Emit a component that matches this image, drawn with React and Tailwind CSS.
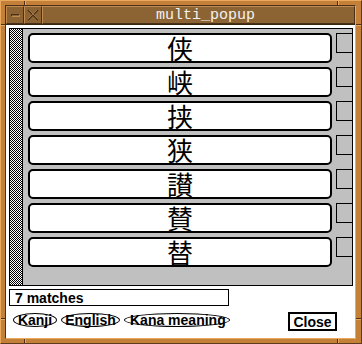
import React from "react";

const KANJI = ["侠", "峡", "挟", "狭", "讃", "賛", "替"];

function Notch({ className }) {
  return <div className={"absolute " + className} />;
}

export default function App() {
  return (
    <div
      className="relative w-[362px] h-[344px] overflow-hidden bg-[#c48038] border border-t-[#eaaa5e] border-l-[#eaaa5e] border-r-[#5c3c1c] border-b-[#5c3c1c]"
      style={{ fontFamily: '"Liberation Sans", Arial, sans-serif' }}
    >
      {/* frame notches */}
      <Notch className="left-[23px] top-0 w-[1px] h-[5px] bg-[#4a3018]" />
      <Notch className="left-[24px] top-0 w-[1px] h-[5px] bg-[#eaaa5e]" />
      <Notch className="left-[336px] top-0 w-[1px] h-[5px] bg-[#4a3018]" />
      <Notch className="left-[337px] top-0 w-[1px] h-[5px] bg-[#eaaa5e]" />
      <Notch className="left-0 top-[23px] w-[5px] h-[1px] bg-[#4a3018]" />
      <Notch className="left-0 top-[24px] w-[5px] h-[1px] bg-[#eaaa5e]" />
      <Notch className="right-0 top-[23px] w-[6px] h-[1px] bg-[#4a3018]" />
      <Notch className="right-0 top-[24px] w-[6px] h-[1px] bg-[#eaaa5e]" />
      <Notch className="left-0 top-[317px] w-[5px] h-[1px] bg-[#4a3018]" />
      <Notch className="left-0 top-[318px] w-[5px] h-[1px] bg-[#eaaa5e]" />
      <Notch className="right-0 top-[317px] w-[6px] h-[1px] bg-[#4a3018]" />
      <Notch className="right-0 top-[318px] w-[6px] h-[1px] bg-[#eaaa5e]" />
      <Notch className="left-[23px] bottom-0 w-[1px] h-[6px] bg-[#4a3018]" />
      <Notch className="left-[24px] bottom-0 w-[1px] h-[6px] bg-[#eaaa5e]" />
      <Notch className="left-[336px] bottom-0 w-[1px] h-[6px] bg-[#4a3018]" />
      <Notch className="left-[337px] bottom-0 w-[1px] h-[6px] bg-[#eaaa5e]" />

      <div className="absolute left-[4px] top-[4px] w-[351px] h-[334px] flex flex-col border border-t-[#4a3018] border-l-[#4a3018] border-r-[#eaaa5e] border-b-[#eaaa5e]">
        {/* title bar */}
        <div className="flex h-[19px] shrink-0 bg-[#8c6434] border-b border-[#3c2810]">
          <div className="w-[18px] h-full flex items-center justify-center bg-[#8c6434] border border-t-[#c08a50] border-l-[#c08a50] border-r-[#4a3018] border-b-[#4a3018]">
            <div className="w-[9px] h-[3px] border border-t-[#4a3018] border-l-[#4a3018] border-r-[#c08a50] border-b-[#c08a50]" />
          </div>
          <div className="w-[18px] h-full flex items-center justify-center bg-[#8c6434] border border-t-[#c08a50] border-l-[#c08a50] border-r-[#4a3018] border-b-[#4a3018]">
            <svg width="12" height="12" viewBox="0 0 12 12">
              <path d="M1 1 L11 11 M11 1 L1 11" stroke="#4a3018" strokeWidth="1.6" />
              <path d="M2 1 L11 10 M10 1 L1 10" stroke="#b08050" strokeWidth="0.8" />
            </svg>
          </div>
          <div className="flex-1 flex items-center justify-center border border-t-[#c08a50] border-l-[#c08a50] border-r-[#4a3018] border-b-[#4a3018]">
            <span
              className="text-[15px] leading-none text-[#f2f2f2] pl-[14px]"
              style={{ fontFamily: '"Liberation Mono", "DejaVu Sans Mono", monospace' }}
            >
              multi_popup
            </span>
          </div>
        </div>

        {/* body */}
        <div className="flex-1 bg-white flex flex-col pl-[3px] pr-[2px] pt-[3px]">
          <div className="flex h-[258px] border border-black">
            <div className="w-[13px] border-r border-black bg-[repeating-conic-gradient(#000_0_25%,#fff_0_50%)] bg-[length:2px_2px]" />
            <div className="flex-1 bg-[#c0c0c0] flex flex-col gap-[4px] pt-[4px] pl-[5px]">
              {KANJI.map((k) => (
                <div key={k} className="flex gap-[4px] h-[30px]">
                  <div className="flex-1 h-full bg-white border-2 border-black rounded-[5px] flex items-center justify-center">
                    <span
                      className="text-[26px] leading-none text-black"
                      style={{ fontFamily: '"Noto Sans CJK JP", "Noto Sans CJK SC", sans-serif', fontWeight: 400 }}
                    >
                      {k}
                    </span>
                  </div>
                  <div className="w-[16px] h-[20px] bg-[#c0c0c0] border-l border-y border-black" />
                </div>
              ))}
            </div>
          </div>

          <div className="mt-[3px] w-[220px] h-[17px] border border-black flex items-center pl-[5px]">
            <span className="text-[14px] font-bold leading-none">7 matches</span>
          </div>

          <div className="mt-[6px] flex items-start">
            <div className="flex gap-[4px] pl-[4px] pt-[1px]">
              <div className="w-[44px] h-[14px] rounded-[50%] border border-black flex items-center justify-center">
                <span className="text-[14px] font-bold leading-none whitespace-nowrap">Kanji</span>
              </div>
              <div className="w-[59px] h-[14px] rounded-[50%] border border-black flex items-center justify-center">
                <span className="text-[14px] font-bold leading-none whitespace-nowrap">English</span>
              </div>
              <div className="w-[106px] h-[14px] rounded-[50%] border border-black flex items-center pl-[5px]">
                <span className="text-[14px] font-bold leading-none whitespace-nowrap">Kana meaning</span>
              </div>
            </div>
            <div className="ml-[58px] w-[49px] h-[19px] border-2 border-black flex items-center justify-center">
              <span className="text-[14px] font-bold leading-none">Close</span>
            </div>
          </div>
        </div>
      </div>
    </div>
  );
}
